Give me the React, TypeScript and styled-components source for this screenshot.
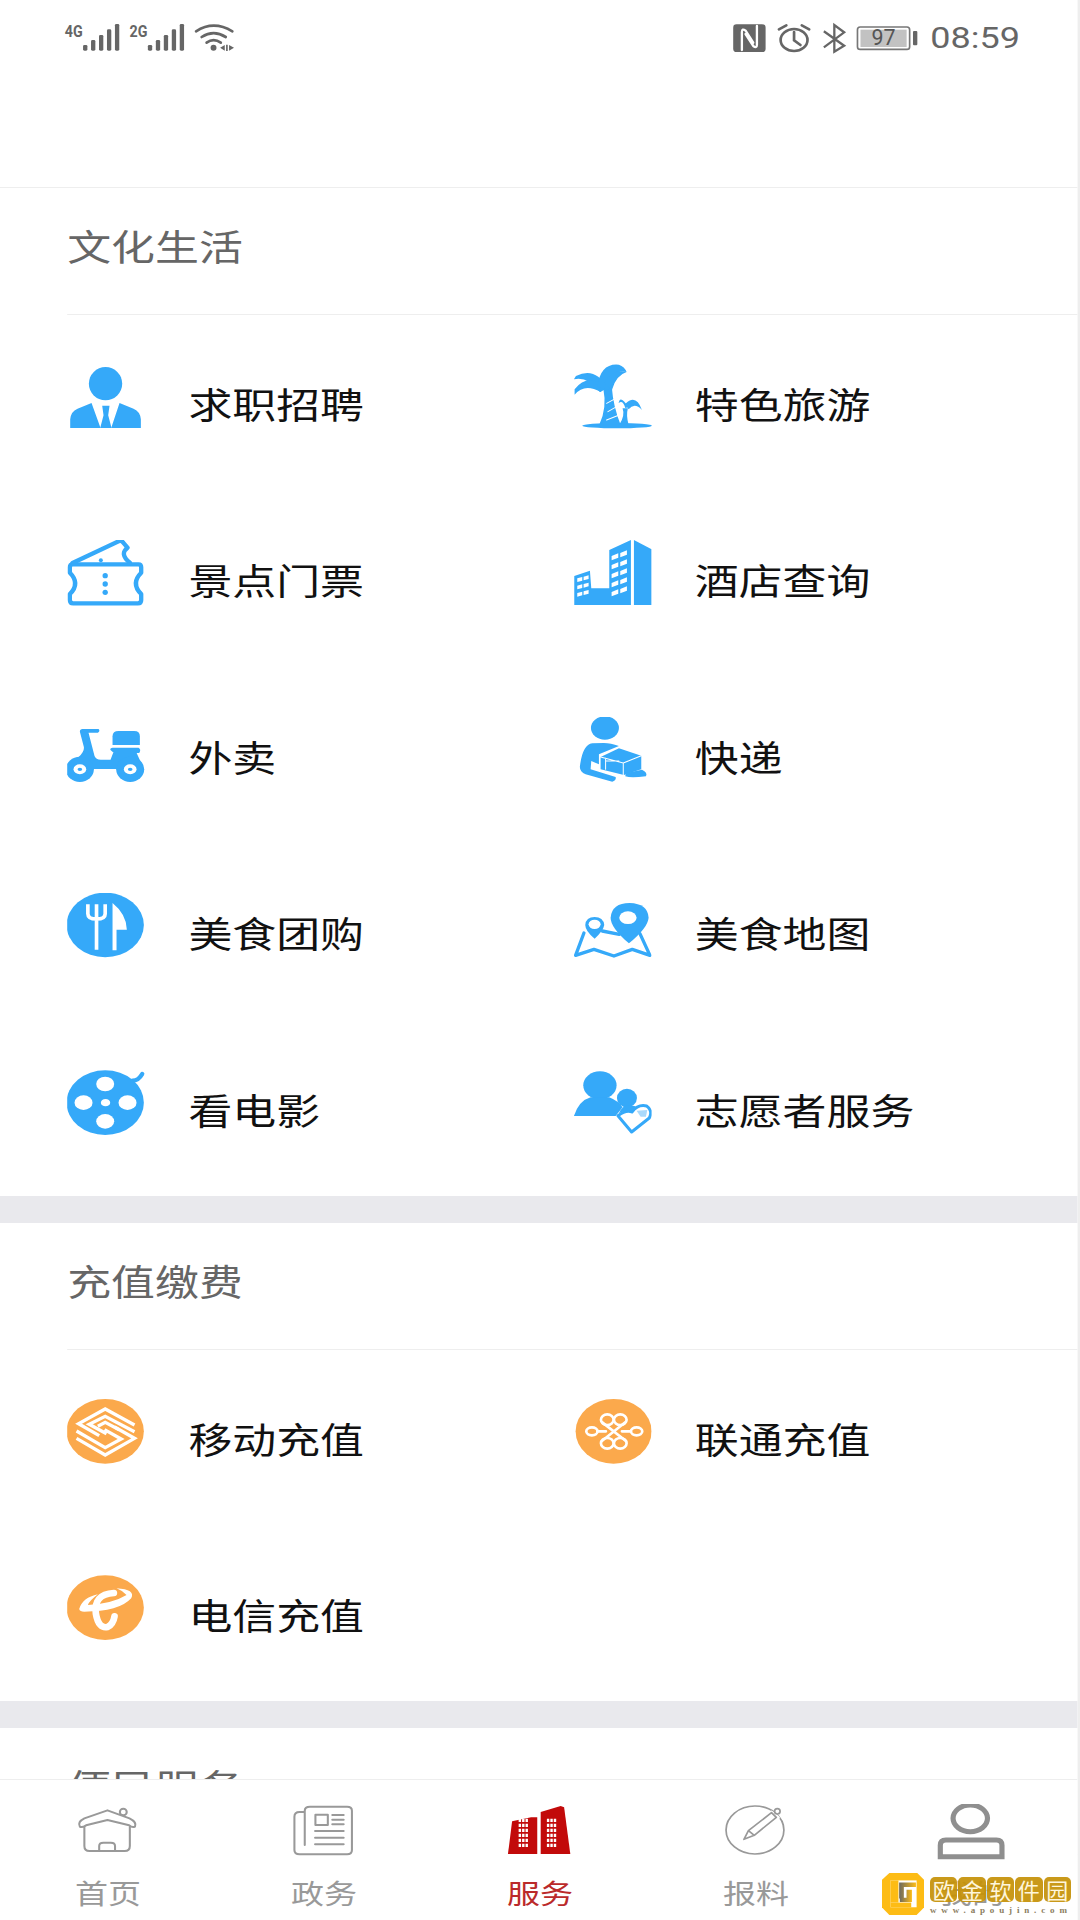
import React from 'react';
import styled, { createGlobalStyle } from 'styled-components';

const BLUE = '#35a9f9';
const ORANGE = '#fba94c';
const SLATE = '#666666';
const TAB_GRAY = '#999999';
const RED = '#c20a0a';

const GlobalStyle = createGlobalStyle`
  html, body {
    margin: 0;
    padding: 0;
    background: #ffffff;
  }
`;

const Screen = styled.div`
  position: relative;
  width: 1080px;
  height: 1920px;
  overflow: hidden;
  background: #ffffff;
  font-family: 'Noto Sans CJK SC', sans-serif;
`;

/* the app renders on a 900 wide canvas, widened to fill the panel */
const Stage = styled.div`
  position: relative;
  box-sizing: border-box;
  width: 900px;
  height: 1920px;
  overflow: hidden;
  border-right: 2px solid #eeeeee;
  transform: scaleX(1.2);
  transform-origin: 0 0;
`;

const StatusBar = styled.header`
  box-sizing: border-box;
  height: 188px;
  padding: 24px 48px 0 54px;
  display: flex;
  justify-content: space-between;
  align-items: flex-start;
  border-bottom: 1px solid #eeeeee;
`;

const StatusGroup = styled.div`
  display: flex;
  align-items: flex-start;
  gap: 10px;
`;

const Clock = styled.span`
  font-family: Roboto, 'Liberation Sans', sans-serif;
  font-size: 30px;
  line-height: 28px;
  color: ${SLATE};
`;

const StatusSvg = styled.svg.attrs({ preserveAspectRatio: 'none' })<{ $w: number }>`
  display: block;
  width: ${(p) => p.$w}px;
  height: 28px;
  flex: none;
  overflow: visible;
`;

const SectionTitleRow = styled.div`
  box-sizing: border-box;
  height: 127px;
  margin-left: 56px;
  padding-bottom: 11px;
  display: flex;
  align-items: center;
  border-bottom: 1px solid #eeeeee;
  font-size: 36.6px;
  color: ${SLATE};
`;

const ServiceGrid = styled.div`
  padding: 5px 0 0 56px;
  display: grid;
  grid-template-columns: 422px 1fr;
  grid-auto-rows: 170px;
  row-gap: 6.4px;
`;

const ServiceItem = styled.div`
  display: flex;
  align-items: center;
  gap: 36px;
`;

const ServiceIcon = styled.svg.attrs({ preserveAspectRatio: 'none' })`
  display: block;
  flex: none;
  width: 65px;
  height: 66px;
  margin-bottom: 16px;
`;

const ServiceName = styled.span`
  padding-bottom: 2px;
  font-size: 36.6px;
  line-height: 50px;
  color: #111111;
`;

const Band = styled.div`
  height: 27px;
  background: #e9e9ed;
`;

const TabBar = styled.nav`
  position: absolute;
  left: 0;
  right: 0;
  bottom: 0;
  box-sizing: border-box;
  height: 141px;
  padding-top: 24px;
  display: grid;
  grid-template-columns: repeat(5, 180px);
  background: #ffffff;
  border-top: 1px solid #eeeeee;
`;

const Tab = styled.div<{ $active?: boolean }>`
  display: flex;
  flex-direction: column;
  align-items: center;
  font-size: 27.5px;
  line-height: 34px;
  color: ${(p) => (p.$active ? '#bb2a2a' : TAB_GRAY)};
`;

const TabIcon = styled.svg.attrs({ preserveAspectRatio: 'none' })`
  display: block;
  width: 62px;
  height: 56px;
  margin-bottom: 15px;
`;

const Watermark = styled.div`
  position: absolute;
  left: 882px;
  top: 1873px;
  display: flex;
  gap: 6px;
`;

const WatermarkLogo = styled.svg`
  display: block;
  width: 42px;
  height: 42px;
`;

const WatermarkText = styled.div`
  display: flex;
  flex-direction: column;
`;

const TileRow = styled.div`
  display: flex;
  margin-top: 4px;
  gap: 1px;
`;

const Tile = styled.span`
  width: 27.4px;
  height: 25px;
  border-radius: 5px;
  background: rgba(197, 145, 9, 0.93);
  color: #fff6dc;
  font-size: 22px;
  line-height: 25px;
  text-align: center;
`;

const SiteUrl = styled.span`
  margin-top: 3px;
  font-family: 'Liberation Serif', serif;
  font-size: 9px;
  font-weight: 700;
  line-height: 11px;
  letter-spacing: 4.85px;
  white-space: nowrap;
  color: #8b7d60;
`;

/* ---- status bar drawings ---- */

const Signal = ({ label }: { label: string }) => (
  <StatusSvg $w={44} viewBox="78 72 159 84">
    <text x="78" y="110" fontFamily="Roboto, sans-serif" fontWeight="700" fontSize="48" fill={SLATE} textLength="54" lengthAdjust="spacingAndGlyphs">
      {label}
    </text>
    {[135, 120, 105, 88, 72].map((top, i) => (
      <rect key={top} x={133 + i * 24} y={top} width="13" height={152 - top} rx="4" fill={SLATE} />
    ))}
  </StatusSvg>
);

const Wifi = () => (
  <StatusSvg $w={33} viewBox="460 72 120 84">
    <g fill="none" stroke={SLATE} strokeWidth="8" strokeLinecap="round">
      <path d="M465 94 Q518 60 575 94" />
      <path d="M482 111 Q518 88 555 111" />
      <path d="M497 128 Q518 113 540 128" />
    </g>
    <circle cx="518" cy="143" r="9" fill={SLATE} />
    <path d="M538 143 L552 135 V152 Z M556 134 H561 V153 H556 Z M565 135 L580 143 L565 152 Z" fill={SLATE} />
  </StatusSvg>
);

const Nfc = () => (
  <StatusSvg $w={27} viewBox="68 72 97 84">
    <rect x="68" y="73" width="97" height="83" rx="10" fill={SLATE} />
    <path d="M94 150 V96 Q94 84 105 92 L128 128 M139 78 V134 Q139 146 128 138 L105 102" fill="none" stroke="#ffffff" strokeWidth="7" strokeLinecap="round" />
  </StatusSvg>
);

const Alarm = () => (
  <StatusSvg $w={28} viewBox="204 72 100 84">
    <g fill="none" stroke={SLATE} strokeWidth="8" strokeLinecap="round">
      <ellipse cx="253" cy="120" rx="40" ry="33" />
      <path d="M253 96 V121 L272 135" />
      <path d="M208 88 L230 76 M298 88 L276 76" />
    </g>
  </StatusSvg>
);

const Bluetooth = () => (
  <StatusSvg $w={18} viewBox="336 72 66 84">
    <path d="M338 94 L400 137 L370 155 V75 L400 97 L338 142" fill="none" stroke={SLATE} strokeWidth="7" />
  </StatusSvg>
);

const Battery = () => (
  <StatusSvg $w={51} viewBox="448 72 183 84">
    <rect x="450" y="81" width="156" height="67" rx="8" fill="#ffffff" stroke="#777777" strokeWidth="5" />
    <rect x="459" y="89" width="138" height="52" fill="#c2c2c2" />
    <text x="528" y="136" textAnchor="middle" fontFamily="Roboto, sans-serif" fontSize="64" fill="#555555">
      97
    </text>
    <rect x="616" y="93" width="13" height="43" rx="3" fill={SLATE} />
  </StatusSvg>
);

/* ---- service icons, each viewBox is the 3x grid the artwork was traced on ---- */

const WHITE_LINE = { fill: 'none', stroke: '#ffffff', strokeLinecap: 'round', strokeLinejoin: 'round' } as const;
const BLUE_LINE = { fill: 'none', stroke: BLUE, strokeLinecap: 'round', strokeLinejoin: 'round' } as const;

const PersonIcon = () => (
  <ServiceIcon viewBox="84 72 234 198" fill={BLUE}>
    <ellipse cx="199" cy="131" rx="50" ry="50" />
    <path d="M93 264 V238 Q95 214 115 206 L157 189 L184 264 Z" />
    <path d="M305 264 V238 Q303 214 283 206 L241 189 L216 264 Z" />
    <path d="M189 197 H211 L207 226 L217 264 H183 L193 226 Z" />
  </ServiceIcon>
);

const PalmIcon = () => (
  <ServiceIcon viewBox="69 72 234 198" fill={BLUE}>
    <ellipse cx="200" cy="257" rx="105" ry="8" />
    <path d="M158 145 Q170 205 146 254 H210 Q188 200 184 145 Z" />
    <path d="M168 190 L190 178 M172 215 L198 200 M168 240 L204 226" {...WHITE_LINE} strokeWidth="3" />
    <path d="M170 145 Q135 78 76 108 L70 118 Q110 108 148 156 Z" />
    <path d="M168 140 Q110 98 72 148 L72 164 Q102 128 150 156 Z" />
    <path d="M140 140 Q150 68 205 74 Q222 80 228 96 Q184 84 184 152 Z" />
    <path d="M160 130 Q185 85 228 96 Q196 106 184 150 Z" />
    <path d="M216 205 Q224 228 206 254 H234 Q226 226 232 205 Z" />
    <path d="M234 202 Q208 162 204 190 Q216 178 224 204 Z" />
    <path d="M224 192 Q256 160 274 210 Q252 186 234 208 Z" />
  </ServiceIcon>
);

const TicketIcon = () => (
  <ServiceIcon viewBox="84 600 234 198" fill={BLUE}>
    <g {...BLUE_LINE} strokeWidth="13">
      <path d="M100 673 H298 Q306 673 306 682 V698 Q274 730 306 762 V780 Q306 790 296 790 H102 Q92 790 92 780 V762 Q124 730 92 698 V682 Q92 673 100 673 Z" />
      <path d="M100 669 L238 604 Q247 600 252 608 L265 623 Q240 642 272 668" />
    </g>
    <circle cx="198" cy="707" r="8" />
    <circle cx="198" cy="732" r="8" />
    <circle cx="198" cy="757" r="8" />
    <circle cx="185" cy="661" r="6" />
  </ServiceIcon>
);

const towerWindows = [0, 1, 2, 3, 4].flatMap((row) =>
  [0, 1].map((col) => {
    const x = 183 + col * 26;
    const y = 648 - col * 9 + row * 27;
    return `M${x} ${y} L${x + 20} ${y - 8} V${y + 5} L${x} ${y + 13} Z`;
  })
);
const annexWindows = [0, 1, 2].flatMap((row) =>
  [0, 1].map((col) => {
    const x = 80 + col * 19;
    const y = 715 - col * 5 + row * 22;
    return `M${x} ${y} L${x + 15} ${y - 4} V${y + 7} L${x} ${y + 11} Z`;
  })
);

const HotelIcon = () => (
  <ServiceIcon viewBox="69 600 234 198" fill={BLUE}>
    <path d="M71 708 L118 692 L122 745 H176 V630 L241 600 V795 H71 Z" />
    <path d="M250 600 L303 628 V795 H250 Z" />
    <path d={[...towerWindows, ...annexWindows].join(' ')} fill="#ffffff" />
  </ServiceIcon>
);

const wheel = (cx: number) => (
  <g key={cx}>
    <ellipse cx={cx} cy="205" rx="42" ry="38" fill={BLUE} />
    <ellipse cx={cx} cy="205" rx="19" ry="15" fill="#ffffff" />
    <ellipse cx={cx} cy="205" rx="7" ry="5" fill={BLUE} />
  </g>
);

const ScooterIcon = () => (
  <ServiceIcon viewBox="84 48 234 198" fill={BLUE}>
    <path d="M122 92 Q122 84 130 84 H178 Q184 90 176 95 H148 L166 165 Q170 176 185 176 H214 L222 155 H292 L314 204 H160 L118 168 Q136 152 134 138 Z" />
    <path d="M220 132 V106 Q220 90 238 90 H285 Q302 90 302 106 V132 Z" />
    <path d="M213 146 Q213 140 220 140 H298 Q307 146 300 156 H224 Z" />
    {[122, 273].map(wheel)}
  </ServiceIcon>
);

const CourierIcon = () => (
  <ServiceIcon viewBox="69 48 234 198" fill={BLUE}>
    <ellipse cx="163" cy="81" rx="42" ry="35" />
    <path d="M125 127 Q96 131 88 195 Q86 213 105 220 L185 242 Q198 238 195 228 L120 205 L122 180 L145 190 V160 L205 135 Q180 126 160 126 Z" />
    <path d="M150 168 L205 142 L272 164 V205 L220 222 L150 205 Z" />
    <path d="M150 168 L218 186 L272 164 M218 186 V222 M165 180 H205 M165 205 V172" {...WHITE_LINE} strokeWidth="3" />
    <path d="M226 216 L274 206 Q292 214 286 226 Q240 232 224 226 Z" />
  </ServiceIcon>
);

const DiningIcon = () => (
  <ServiceIcon viewBox="84 576 234 198" fill={BLUE}>
    <ellipse cx="198" cy="672" rx="116" ry="97" />
    <path d="M146 610 V638 Q146 654 172 654 Q198 654 198 638 V610 M172 610 V746" {...WHITE_LINE} strokeWidth="11" strokeLinecap="butt" />
    <path d="M220 606 Q262 640 263 686 H232 V748 H220 Z" fill="#ffffff" />
  </ServiceIcon>
);

const FoodMapIcon = () => (
  <ServiceIcon viewBox="69 576 234 198" fill={BLUE}>
    <path d="M100 696 L75 763 L130 745 L190 765 L245 745 L298 763 L268 698 M155 690 L206 700" {...BLUE_LINE} strokeWidth="10" />
    <path d="M235 727 Q180 680 180 650 Q184 606 237 606 Q292 608 294 650 Q292 680 235 727 Z" />
    <ellipse cx="232" cy="650" rx="26" ry="19" fill="#ffffff" />
    <path d="M132 713 Q104 690 104 672 Q106 648 132 648 Q158 648 161 672 Q158 690 132 713 Z" />
    <ellipse cx="132" cy="670" rx="18" ry="14" fill="#ffffff" />
  </ServiceIcon>
);

const FilmIcon = () => (
  <ServiceIcon viewBox="84 1104 234 198" fill={BLUE}>
    <path d="M280 1136 Q298 1136 309 1116" {...BLUE_LINE} strokeWidth="13" />
    <ellipse cx="198" cy="1202" rx="116" ry="97" />
    <g fill="#ffffff">
      <ellipse cx="198" cy="1146" rx="27" ry="22" />
      <ellipse cx="198" cy="1258" rx="27" ry="22" />
      <ellipse cx="133" cy="1202" rx="27" ry="22" />
      <ellipse cx="265" cy="1202" rx="27" ry="22" />
      <ellipse cx="199" cy="1202" rx="14" ry="11" />
    </g>
  </ServiceIcon>
);

const VolunteerIcon = () => (
  <ServiceIcon viewBox="69 1104 234 198" fill={BLUE}>
    <ellipse cx="148" cy="1150" rx="50" ry="42" />
    <path d="M70 1242 Q85 1196 120 1186 H176 Q205 1198 216 1216 L195 1242 Z" />
    <ellipse cx="229" cy="1188" rx="30" ry="28" />
    <path d="M243 1290 L202 1241 Q228 1222 244 1230 Q262 1206 288 1212 Q308 1226 296 1248 Z" fill="#ffffff" stroke={BLUE} strokeWidth="9" strokeLinejoin="round" />
    <path d="M205 1234 Q215 1208 240 1210 Q258 1212 258 1218 L244 1228 Q226 1222 205 1234 Z" />
    <path d="M258 1226 L290 1224 L286 1244 L270 1244 Z" fill="#a9d9fb" />
  </ServiceIcon>
);

const MobileIcon = () => (
  <ServiceIcon viewBox="84 54 234 198" fill={ORANGE}>
    <ellipse cx="198" cy="151" rx="116" ry="97" />
    <g {...WHITE_LINE} strokeWidth="10" strokeLinecap="butt" strokeLinejoin="miter">
      <path d="M286 132 L198 84 L118 128 L180 164" />
      <path d="M286 152 L198 106 L150 130 L202 158" />
      <path d="M240 146 L198 124 L176 136" />
      <path d="M112 150 L198 200 L246 174 L196 146" />
      <path d="M112 172 L198 222 L286 172 L226 138" />
    </g>
  </ServiceIcon>
);

const UnicomIcon = () => (
  <ServiceIcon viewBox="69 54 234 198" fill={ORANGE}>
    <ellipse cx="189" cy="151" rx="114" ry="97" />
    <g {...WHITE_LINE} strokeWidth="8">
      <ellipse cx="170" cy="116" rx="19" ry="16" />
      <ellipse cx="209" cy="116" rx="19" ry="16" />
      <ellipse cx="170" cy="187" rx="19" ry="16" />
      <ellipse cx="209" cy="187" rx="19" ry="16" />
      <ellipse cx="124" cy="151" rx="17" ry="12" />
      <ellipse cx="258" cy="151" rx="17" ry="12" />
      <path d="M155 124 L226 180 M224 124 L154 180 M140 151 H166 M214 151 H241" />
    </g>
  </ServiceIcon>
);

const TelecomIcon = () => (
  <ServiceIcon viewBox="84 582 234 198" fill={ORANGE}>
    <ellipse cx="198" cy="680" rx="116" ry="97" />
    <path d="M224 636 Q162 640 170 698 Q178 744 205 738 Q222 730 226 706" {...WHITE_LINE} strokeWidth="20" />
    <path d="M120 684 Q130 650 176 640 Q150 660 146 672 Q220 668 262 642 Q248 628 232 622 Q290 625 276 652 Q240 692 135 692 Q122 692 120 684 Z" fill="#ffffff" />
  </ServiceIcon>
);

/* ---- tab bar drawings ---- */

const TAB_STROKE = { fill: 'none', stroke: TAB_GRAY, strokeLinecap: 'round', strokeLinejoin: 'round' } as const;

const HomeGlyph = () => (
  <TabIcon viewBox="205.6 252 216 168">
    <g {...TAB_STROKE} strokeWidth="6">
      <circle cx="358" cy="276" r="10" />
      <path d="M232 320 Q224 306 245 295 L312 271 L376 295 Q398 306 392 320 Q384 324 375 316 L312 300 L250 316 Q238 324 232 320 Z" fill="#ffffff" />
      <path d="M245 320 V378 Q245 393 260 393 H362 Q377 393 377 378 V320" />
      <path d="M288 393 V378 Q288 368 300 368 H322 Q334 368 334 378 V393" />
    </g>
  </TabIcon>
);

const NewsGlyph = () => (
  <TabIcon viewBox="832.9 252 216 168">
    <g {...TAB_STROKE} strokeWidth="6">
      <path d="M885 276 H870 Q855 276 855 290 V390 Q855 403 870 403 H1008 Q1022 403 1022 390 V272 Q1022 260 1008 260 H900 Q885 260 885 272 V375" />
      <rect x="916" y="284" width="36" height="31" />
      <path d="M965 285 H998 M965 299 H998 M965 313 H998 M915 333 H998 M915 353 H998 M915 373 H998" />
    </g>
  </TabIcon>
);

const blockWindows = (x0: number) =>
  [0, 1, 2, 3, 4, 5].flatMap((row) =>
    [0, 1, 2].map((col) => `M${x0 + col * 10} ${296 + row * 15} h7 v10 h-7 Z`)
  );

const CityGlyph = () => (
  <TabIcon viewBox="0 252 216 168">
    <g fill={RED}>
      <path d="M15 402 L27 304 L82 292 H100 V402 Z" />
      <path d="M110 402 V276 L168 258 L178 262 L196 402 Z" />
    </g>
    <path d={[...blockWindows(46), ...blockWindows(128)].join(' ')} fill="#ffffff" />
  </TabIcon>
);

const PenGlyph = () => (
  <TabIcon viewBox="519 252 216 168">
    <g {...TAB_STROKE} strokeWidth="5">
      <ellipse cx="624" cy="330" rx="84" ry="72" />
      <path d="M592 358 L605 332 L672 278 L690 293 L622 346 Z" fill="#ffffff" stroke="#ffffff" strokeWidth="12" />
      <path d="M592 358 L605 332 L672 278 L686 292 L622 346 Z M605 332 L622 346" />
      <circle cx="689" cy="274" r="8" fill="#ffffff" />
    </g>
  </TabIcon>
);

const UserGlyph = () => (
  <TabIcon viewBox="1146 252 216 168">
    <g fill="none" stroke="#8f8f8f" strokeWidth="15">
      <ellipse cx="1249" cy="295" rx="50" ry="40" />
      <path d="M1162 410 V376 Q1162 360 1178 360 H1325 Q1341 360 1341 376 V410 Z" />
    </g>
  </TabIcon>
);

const culture = [
  { name: '求职招聘', icon: <PersonIcon /> },
  { name: '特色旅游', icon: <PalmIcon /> },
  { name: '景点门票', icon: <TicketIcon /> },
  { name: '酒店查询', icon: <HotelIcon /> },
  { name: '外卖', icon: <ScooterIcon /> },
  { name: '快递', icon: <CourierIcon /> },
  { name: '美食团购', icon: <DiningIcon /> },
  { name: '美食地图', icon: <FoodMapIcon /> },
  { name: '看电影', icon: <FilmIcon /> },
  { name: '志愿者服务', icon: <VolunteerIcon /> },
];

const payments = [
  { name: '移动充值', icon: <MobileIcon /> },
  { name: '联通充值', icon: <UnicomIcon /> },
  { name: '电信充值', icon: <TelecomIcon /> },
];

const tabs = [
  { name: '首页', icon: <HomeGlyph /> },
  { name: '政务', icon: <NewsGlyph /> },
  { name: '服务', icon: <CityGlyph />, active: true },
  { name: '报料', icon: <PenGlyph /> },
  { name: '我的', icon: <UserGlyph /> },
];

const Services = ({ items }: { items: { name: string; icon: React.ReactNode }[] }) => (
  <ServiceGrid>
    {items.map((item) => (
      <ServiceItem key={item.name}>
        {item.icon}
        <ServiceName>{item.name}</ServiceName>
      </ServiceItem>
    ))}
  </ServiceGrid>
);

const App = (): React.JSX.Element => (
  <Screen>
    <GlobalStyle />
    <Stage>
      <StatusBar>
        <StatusGroup>
          <Signal label="4G" />
          <Signal label="2G" />
          <Wifi />
        </StatusGroup>
        <StatusGroup>
          <Nfc />
          <Alarm />
          <Bluetooth />
          <Battery />
          <Clock>08:59</Clock>
        </StatusGroup>
      </StatusBar>

      <SectionTitleRow>文化生活</SectionTitleRow>
      <Services items={culture} />
      <Band />

      <SectionTitleRow>充值缴费</SectionTitleRow>
      <Services items={payments} />
      <Band />

      <SectionTitleRow>便民服务</SectionTitleRow>

      <TabBar>
        {tabs.map((tab) => (
          <Tab key={tab.name} $active={tab.active}>
            {tab.icon}
            {tab.name}
          </Tab>
        ))}
      </TabBar>
    </Stage>

    <Watermark>
      <WatermarkLogo viewBox="35 40 125 125">
        <defs>
          <linearGradient id="hookShade" x1="0" y1="0" x2="1" y2="0">
            <stop offset="0" stopColor="#6d6a5e" />
            <stop offset="1" stopColor="#fdbc15" />
          </linearGradient>
        </defs>
        <path d="M57 40 H140 L160 60 V143 L138 165 H57 L35 143 V60 Z" fill="#fdbc15" />
        <rect x="60" y="62" width="78" height="80" fill="#ffffff" />
        <path d="M60 62 H84 V128 H60 Z" fill="#fdbc15" />
        <path d="M60 128 H122 V142 H60 Z" fill="#fdbc15" />
        <path d="M86 68 H136 V82 H100 V116 H86 Z" fill="url(#hookShade)" />
        <path d="M108 90 H124 V126 H88 V114 H108 Z" fill="url(#hookShade)" />
      </WatermarkLogo>
      <WatermarkText>
        <TileRow>
          {['欧', '金', '软', '件', '园'].map((c) => (
            <Tile key={c}>{c}</Tile>
          ))}
        </TileRow>
        <SiteUrl>www.apoujin.com</SiteUrl>
      </WatermarkText>
    </Watermark>
  </Screen>
);

export default App;
